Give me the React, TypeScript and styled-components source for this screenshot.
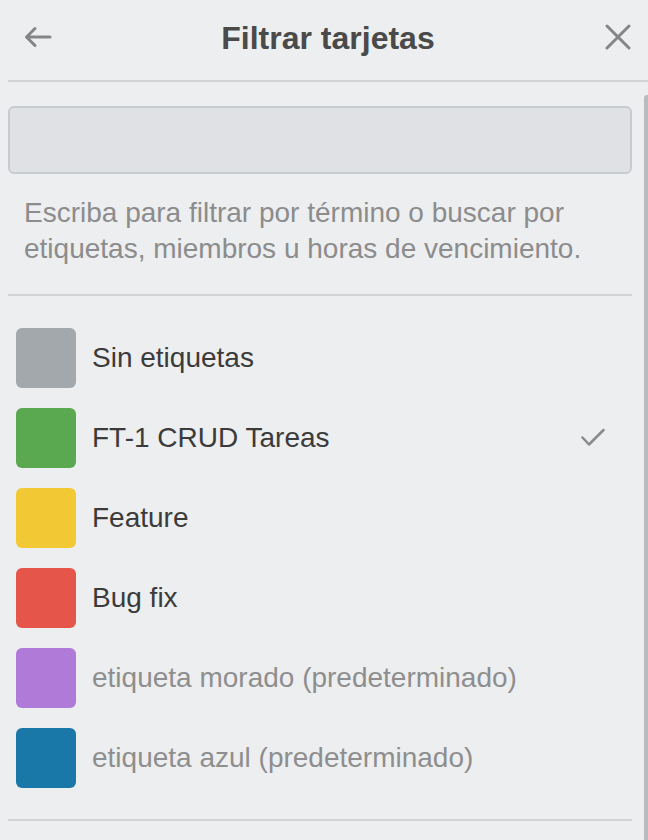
import React from 'react';
import styled, { createGlobalStyle } from 'styled-components';

const GlobalStyle = createGlobalStyle`
  html, body {
    margin: 0;
    padding: 0;
    background: #edeef0;
  }
  body {
    font-family: "Liberation Sans", Arial, sans-serif;
  }
`;

const Panel = styled.div`
  position: relative;
  height: 840px;
  padding-left: 8px;
  overflow: hidden;
  background: #edeef0;
`;

const Header = styled.header`
  height: 80px;
  display: flex;
  align-items: center;
  justify-content: space-between;
  padding: 0 16px;
  border-bottom: 2px solid #d0d4d7;
`;

const Title = styled.h1`
  margin: 0;
  font-size: 32px;
  font-weight: 700;
  color: #4a4a4a;
  margin-top: -4px;
`;

const IconButton = styled.button`
  border: 0;
  background: none;
  padding: 0;
  width: 28px;
  height: 28px;
  display: flex;
  align-items: center;
  justify-content: center;
  color: #858585;
  margin-top: -6px;
`;

const Body = styled.div`
  padding-right: 16px;
`;

const SearchInput = styled.input`
  display: block;
  box-sizing: border-box;
  width: 100%;
  height: 68px;
  margin-top: 24px;
  border: 2px solid #c6cbce;
  border-radius: 6px;
  background: #dfe1e5;
  outline: none;
`;

const Hint = styled.p`
  margin: 21px 0 0;
  padding: 0 16px;
  font-size: 28px;
  line-height: 36px;
  color: #8c8c8c;
`;

const Divider = styled.hr<{ $flush?: boolean }>`
  margin: ${(p) => (p.$flush ? '0' : '27px 0 0')};
  border: 0;
  border-top: 2px solid #d0d4d7;
`;

const LabelList = styled.ul`
  list-style: none;
  margin: 0;
  padding: 22px 0 21px;
`;

const LabelRow = styled.li`
  height: 80px;
  display: flex;
  align-items: center;
  padding: 0 27px 0 8px;
`;

const Swatch = styled.span<{ $color: string }>`
  width: 60px;
  height: 60px;
  border-radius: 6px;
  background: ${(p) => p.$color};
  flex-shrink: 0;
  margin-right: 16px;
`;

const LabelName = styled.span<{ $muted?: boolean }>`
  flex: 1;
  font-size: 28px;
  color: ${(p) => (p.$muted ? '#8e8e8e' : '#3b3b3b')};
`;

const Check = styled.span`
  display: flex;
  color: #8a8a8a;
`;

const ScrollThumb = styled.div`
  position: absolute;
  right: 0;
  top: 95px;
  width: 4px;
  height: 760px;
  border-radius: 3px 0 0 0;
  background: #b7bcc0;
`;

interface Label {
  name: string;
  color: string;
  muted?: boolean;
  checked?: boolean;
}

const labels: Label[] = [
  { name: 'Sin etiquetas', color: '#a3a8ac' },
  { name: 'FT-1 CRUD Tareas', color: '#5aa84f', checked: true },
  { name: 'Feature', color: '#f2c935' },
  { name: 'Bug fix', color: '#e6554a' },
  { name: 'etiqueta morado (predeterminado)', color: '#b07bd8', muted: true },
  { name: 'etiqueta azul (predeterminado)', color: '#1a78a8', muted: true },
];

const BackIcon = () => (
  <svg width="28" height="24" viewBox="0 0 28 24" fill="none" stroke="currentColor" strokeWidth="3" strokeLinecap="round" strokeLinejoin="round">
    <path d="M26 12H3M11 3.5L2.5 12L11 20.5" />
  </svg>
);

const CloseIcon = () => (
  <svg width="26" height="26" viewBox="0 0 26 26" fill="none" stroke="currentColor" strokeWidth="3" strokeLinecap="round">
    <path d="M2 2L24 24M24 2L2 24" />
  </svg>
);

const CheckIcon = () => (
  <svg width="24" height="20" viewBox="0 0 24 20" fill="none" stroke="currentColor" strokeWidth="2.5" strokeLinecap="round" strokeLinejoin="round">
    <path d="M1.5 9.5L8 16.5L22.5 2" />
  </svg>
);

const App = () => {
  return (
    <>
      <GlobalStyle />
      <Panel>
        <Header>
          <IconButton aria-label="Volver">
            <BackIcon />
          </IconButton>
          <Title>Filtrar tarjetas</Title>
          <IconButton aria-label="Cerrar">
            <CloseIcon />
          </IconButton>
        </Header>
        <Body>
          <SearchInput type="text" />
          <Hint>
            Escriba para filtrar por término o buscar por etiquetas, miembros u horas de vencimiento.
          </Hint>
          <Divider />
          <LabelList>
            {labels.map((label) => (
              <LabelRow key={label.name}>
                <Swatch $color={label.color} />
                <LabelName $muted={label.muted}>{label.name}</LabelName>
                {label.checked && (
                  <Check>
                    <CheckIcon />
                  </Check>
                )}
              </LabelRow>
            ))}
          </LabelList>
          <Divider $flush />
        </Body>
        <ScrollThumb />
      </Panel>
    </>
  );
};

export default App;
